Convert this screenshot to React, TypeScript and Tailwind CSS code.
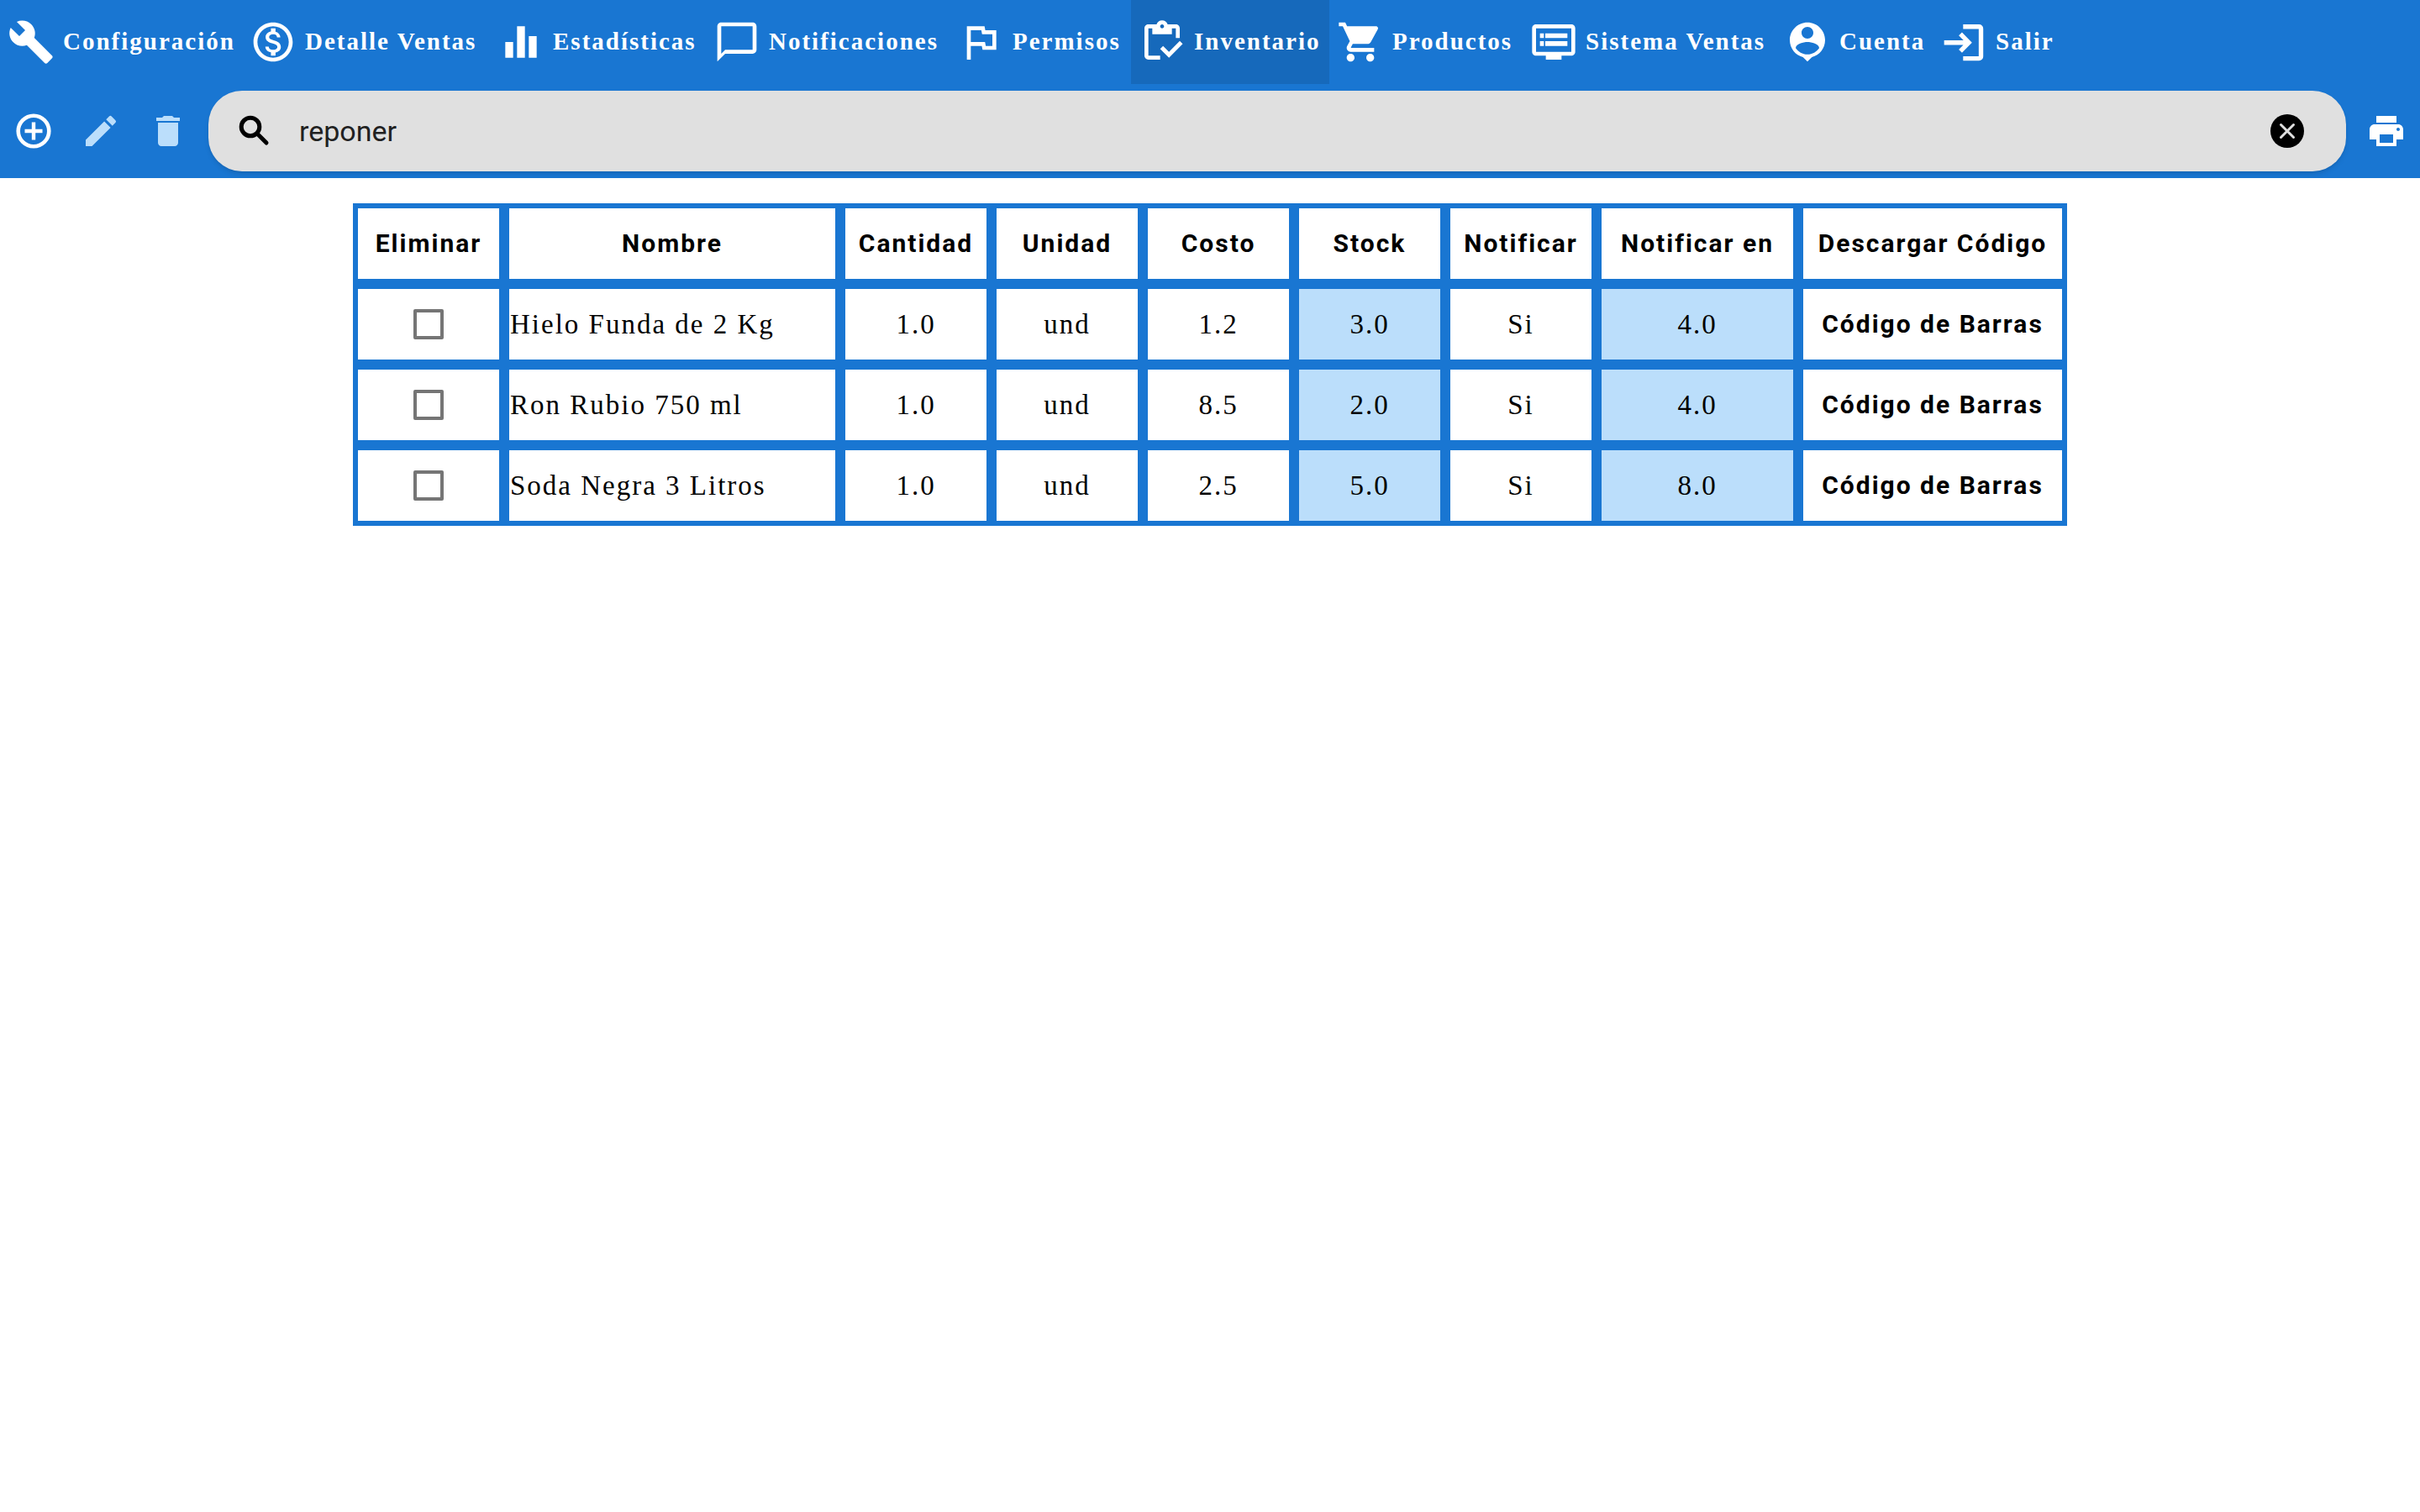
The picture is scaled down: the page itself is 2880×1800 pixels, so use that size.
import { useState, type ComponentType, type ReactNode } from "react";
import {
  MdBuild,
  MdOutlineMonetizationOn,
  MdEqualizer,
  MdChatBubbleOutline,
  MdOutlineFlag,
  MdOutlineInventory,
  MdShoppingCart,
  MdEdit,
  MdDelete,
  MdPrint,
} from "react-icons/md";

type IconProps = { className?: string };

function AccountPinIcon({ className }: IconProps) {
  return (
    <svg viewBox="0 0 24 24" className={className} fill="currentColor" aria-hidden="true">
      <path d="M12 2c-4.970 0-9 4.030-9 9 0 4.170 2.840 7.670 6.690 8.690L12 22l2.310-2.310C18.160 18.670 21 15.170 21 11c0-4.970-4.030-9-9-9zm0 2.300c1.660 0 3 1.340 3 3s-1.340 3-3 3-3-1.340-3-3 1.340-3 3-3zm0 14c-2.500 0-4.710-1.280-6-3.220.03-1.990 4-3.080 6-3.080 1.990 0 5.970 1.090 6 3.080-1.290 1.940-3.500 3.220-6 3.220z" />
    </svg>
  );
}

function ExitIcon({ className }: IconProps) {
  return (
    <svg viewBox="0 0 24 24" className={className} fill="none" stroke="currentColor" strokeWidth="2.3" aria-hidden="true">
      <path d="M11.700 4.200H19.800a1 1 0 0 1 1 1v14.200a1 1 0 0 1-1 1H11.700" />
      <path d="M2 12.300h12.400M10.300 7.900l4.300 4.400-4.300 4.400" />
    </svg>
  );
}

function MonitorListIcon({ className }: IconProps) {
  return (
    <svg viewBox="0 0 24 24" className={className} fill="currentColor" aria-hidden="true">
      <path
        fillRule="evenodd"
        d="M21 3H3c-1.100 0-2 .9-2 2v12c0 1.100.9 2 2 2h5v2h8v-2h5c1.100 0 1.990-.9 1.990-2L23 5c0-1.100-.9-2-2-2zm0 14H3V5h18v12z"
      />
      <path d="M5 7.600h2v2.400H5zM7.700 7.600H19v2.400H7.700zM5 11.600h2v2.400H5zM7.700 11.600H19v2.400H7.700z" />
    </svg>
  );
}

function AddIcon({ className }: IconProps) {
  return (
    <svg viewBox="0 0 48 48" className={className} fill="none" stroke="currentColor" aria-hidden="true">
      <circle cx="24" cy="24" r="18.3" strokeWidth="4.6" />
      <path d="M24 13.500v21M13.500 24h21" strokeWidth="4.4" />
    </svg>
  );
}

function SearchIcon({ className }: IconProps) {
  return (
    <svg viewBox="0 0 48 48" className={className} fill="none" stroke="currentColor" aria-hidden="true">
      <circle cx="20" cy="19" r="10.8" strokeWidth="5" />
      <path d="m29 28 10 10" strokeWidth="5" strokeLinecap="round" />
    </svg>
  );
}

function ClearIcon({ className }: IconProps) {
  return (
    <svg viewBox="0 0 40 40" className={className} aria-hidden="true">
      <circle cx="20" cy="20" r="20" fill="currentColor" />
      <path d="M12.500 12.500 27.500 27.500M27.500 12.500 12.500 27.500" stroke="#e0e0e0" strokeWidth="3" strokeLinecap="round" />
    </svg>
  );
}

type NavItem = { label: string; icon: ComponentType<IconProps>; width: string; active?: boolean };

const navItems: NavItem[] = [
  { label: "Configuración", icon: MdBuild, width: "w-72" },
  { label: "Detalle Ventas", icon: MdOutlineMonetizationOn, width: "w-[295px]" },
  { label: "Estadísticas", icon: MdEqualizer, width: "w-[257px]" },
  { label: "Notificaciones", icon: MdChatBubbleOutline, width: "w-[290px]" },
  { label: "Permisos", icon: MdOutlineFlag, width: "w-[216px]" },
  { label: "Inventario", icon: MdOutlineInventory, width: "w-[236px]", active: true },
  { label: "Productos", icon: MdShoppingCart, width: "w-[230px]" },
  { label: "Sistema Ventas", icon: MonitorListIcon, width: "w-[302px]" },
  { label: "Cuenta", icon: AccountPinIcon, width: "w-[186px]" },
  { label: "Salir", icon: ExitIcon, width: "w-[152px]" },
];

type Product = {
  name: string;
  quantity: string;
  unit: string;
  cost: string;
  stock: string;
  notify: string;
  notifyAt: string;
};

const products: Product[] = [
  { name: "Hielo Funda de 2 Kg", quantity: "1.0", unit: "und", cost: "1.2", stock: "3.0", notify: "Si", notifyAt: "4.0" },
  { name: "Ron Rubio 750 ml", quantity: "1.0", unit: "und", cost: "8.5", stock: "2.0", notify: "Si", notifyAt: "4.0" },
  { name: "Soda Negra 3 Litros", quantity: "1.0", unit: "und", cost: "2.5", stock: "5.0", notify: "Si", notifyAt: "8.0" },
];

const columns = [
  { label: "Eliminar", width: "w-[180px]" },
  { label: "Nombre", width: "w-[400px]" },
  { label: "Cantidad", width: "w-[180px]" },
  { label: "Unidad", width: "w-[180px]" },
  { label: "Costo", width: "w-[180px]" },
  { label: "Stock", width: "w-[180px]" },
  { label: "Notificar", width: "w-[180px]" },
  { label: "Notificar en", width: "w-[240px]" },
  { label: "Descargar Código", width: "w-[320px]" },
];

function NavBar() {
  return (
    <nav className="flex h-[100px]">
      {navItems.map(({ label, icon: Icon, width, active }) => (
        <button
          key={label}
          type="button"
          aria-current={active ? "page" : undefined}
          className={`flex shrink-0 items-center gap-2.5 pl-[9px] font-['Liberation_Serif',serif] text-[29px] font-bold tracking-[2px] whitespace-nowrap text-white ${width} ${active ? "bg-[#1669bb]" : ""}`}
        >
          <Icon className="size-14 shrink-0" />
          {label}
        </button>
      ))}
    </nav>
  );
}

function ToolButton({ label, disabled, children }: { label: string; disabled?: boolean; children: ReactNode }) {
  return (
    <button
      type="button"
      aria-label={label}
      disabled={disabled}
      className="flex size-20 items-center justify-center text-5xl text-white disabled:text-[#bbdefb]"
    >
      {children}
    </button>
  );
}

function ToolBar() {
  const [query, setQuery] = useState("reponer");
  return (
    <div className="flex items-center py-2">
      <div className="flex w-62 justify-between pr-2">
        <ToolButton label="Agregar">
          <AddIcon className="size-12" />
        </ToolButton>
        <ToolButton label="Editar" disabled>
          <MdEdit />
        </ToolButton>
        <ToolButton label="Eliminar" disabled>
          <MdDelete />
        </ToolButton>
      </div>
      <form
        role="search"
        onSubmit={(event) => event.preventDefault()}
        className="flex h-24 flex-1 items-center rounded-[40px] bg-[#e0e0e0] pr-[50px] pl-[30px] shadow-md"
      >
        <button type="submit" aria-label="Buscar" className="text-black">
          <SearchIcon className="size-12" />
        </button>
        <input
          type="text"
          aria-label="Buscar producto"
          value={query}
          onChange={(event) => setQuery(event.target.value)}
          className="min-w-0 flex-1 pl-[30px] font-[Roboto,sans-serif] text-[34px] text-[#212121] outline-none"
        />
        <button type="button" aria-label="Limpiar" onClick={() => setQuery("")} className="text-black">
          <ClearIcon className="size-10" />
        </button>
      </form>
      <div className="flex w-22 justify-center pl-2">
        <ToolButton label="Imprimir">
          <MdPrint />
        </ToolButton>
      </div>
    </div>
  );
}

const cell = "h-24 border-6 border-[#1976d2] p-0 text-center";
const heading = "font-[Roboto,sans-serif] text-3xl font-bold tracking-[2px] whitespace-nowrap";

function InventoryTable() {
  return (
    <table className="mx-auto table-fixed border-separate border-spacing-0 font-['Liberation_Serif',serif] text-[33px] leading-9 tracking-[2px] text-black">
      <thead>
        <tr>
          {columns.map(({ label, width }) => (
            <th key={label} scope="col" className={`${cell} ${heading} ${width}`}>
              {label}
            </th>
          ))}
        </tr>
      </thead>
      <tbody>
        {products.map((product) => (
          <tr key={product.name}>
            <td className={cell}>
              <input
                type="checkbox"
                aria-label={`Eliminar ${product.name}`}
                className="mx-auto block size-9 appearance-none rounded-xs border-4 border-[#757575] checked:bg-[#1976d2]"
              />
            </td>
            <td className="h-24 border-6 border-[#1976d2] p-0 pl-px text-left whitespace-nowrap">{product.name}</td>
            <td className={cell}>{product.quantity}</td>
            <td className={cell}>{product.unit}</td>
            <td className={cell}>{product.cost}</td>
            <td className={`${cell} bg-[#bbdefb]`}>{product.stock}</td>
            <td className={cell}>{product.notify}</td>
            <td className={`${cell} bg-[#bbdefb]`}>{product.notifyAt}</td>
            <td className={cell}>
              <button type="button" className={`block w-full ${heading}`}>
                Código de Barras
              </button>
            </td>
          </tr>
        ))}
      </tbody>
    </table>
  );
}

export default function App() {
  return (
    <div className="min-h-screen bg-white">
      <header className="bg-[#1976d2]">
        <NavBar />
        <ToolBar />
      </header>
      <main className="pt-[30px]">
        <InventoryTable />
      </main>
    </div>
  );
}
